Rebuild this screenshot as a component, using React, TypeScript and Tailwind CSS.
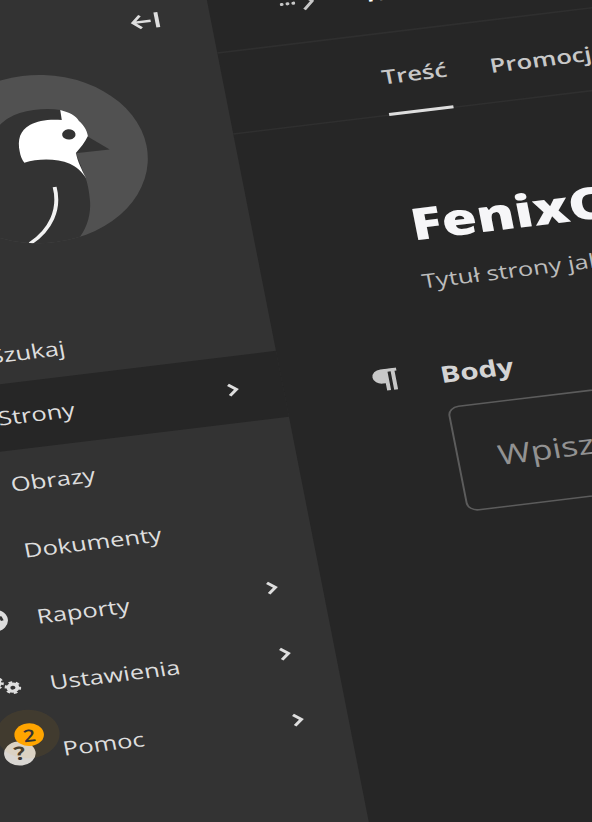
import React from "react";
import { FileText, Image as ImageIcon, Files, Search } from "lucide-react";

function Chevron() {
  return (
    <svg viewBox="0 0 16 16" className="size-4" fill="none" stroke="currentColor" strokeWidth="1.7" aria-hidden="true">
      <path d="M6.6 4.4 10.4 8 6.6 11.6" />
    </svg>
  );
}

function GlobeIcon() {
  return (
    <svg viewBox="0 0 16 16" className="size-4" aria-hidden="true">
      <circle cx="7.6" cy="7.4" r="7.6" fill="currentColor" />
      <path d="M2 5 5 3 7 5 5 8 6 11 4 13 2 9Z" fill="#333333" />
      <path d="M10.6 4.6 12.4 5.4 13 8 11.6 8.2Z" fill="#333333" />
    </svg>
  );
}

function CogsIcon() {
  return (
    <svg viewBox="0 0 16 16" className="size-4" fill="none" stroke="currentColor" aria-hidden="true">
      <circle cx="2.4" cy="4.4" r="2.4" strokeWidth="2" />
      <circle cx="2.4" cy="4.4" r="3.8" strokeWidth="1.4" strokeDasharray="1.6 1.38" />
      <circle cx="11" cy="8.6" r="2.3" strokeWidth="2" />
      <circle cx="11" cy="8.6" r="3.5" strokeWidth="1.4" strokeDasharray="1.9 1.77" />
    </svg>
  );
}

function HelpIcon() {
  return (
    <span className="relative flex size-4 items-center justify-center rounded-full bg-[#d9d6d2] text-[12px] leading-4 font-bold text-[#3a3631]">
      <span className="absolute -top-5 -left-0.5 size-8 rounded-full bg-[#ffa500]/7" />
      ?
      <span className="absolute -top-[11px] left-[7px] flex size-[15px] items-center justify-center rounded-full bg-[#ffa500] text-[11px] leading-[15px] font-semibold text-[#333333]">
        2
      </span>
    </span>
  );
}

const items = [
  { label: "Strony", icon: <FileText className="size-4" />, more: true, active: true },
  { label: "Obrazy", icon: <ImageIcon className="size-4" /> },
  { label: "Dokumenty", icon: <Files className="size-4" /> },
  { label: "Raporty", icon: <GlobeIcon />, more: true },
  { label: "Ustawienia", icon: <CogsIcon />, more: true },
  { label: "Pomoc", icon: <HelpIcon />, more: true },
];

function Bird() {
  return (
    <svg viewBox="0 0 112 112" className="mx-auto mt-[17px] size-28" role="img" aria-label="Wagtail">
      <clipPath id="disc">
        <circle cx="56" cy="56.5" r="55.4" />
      </clipPath>
      <circle cx="56" cy="56.5" r="55.4" fill="#515151" />
      <g clipPath="url(#disc)">
        <path
          d="M71.7 26.2C66 24 58 23.5 51.1 25 46 26.4 43 28.4 40 31.2 30 41 22 60 18 112H67.8C73 106 77 97 77.7 87.1 78.2 81 78.2 76 77.6 71.7L75.3 55.4 83 45.3Z"
          fill="#333333"
        />
        <path d="M82.6 45.5 92.6 55.8 75 55.6Z" fill="#333333" />
        <path
          d="M71.7 26.2C76 28.4 79 31 80 34.8 82 38 83 41 83 45.3 81 49 78 52.6 75.3 55.4 75.4 61 76.4 66 78 73 76.5 68 74 64.4 71.2 62 65 57.4 56 56 48.5 57.8 47.6 55.4 47.2 53 47.3 50.4 47.2 42 49.6 36.4 55 33.6 59.6 31.2 65 31.2 71.5 32.8Z"
          fill="#ffffff"
        />
        <circle cx="73.6" cy="42.8" r="3.4" fill="#333333" />
        <path d="M61.3 75.9C62 91 55 103.6 43.4 110.8" fill="none" stroke="#f2f2f2" strokeWidth="2" />
      </g>
    </svg>
  );
}

function Sidebar() {
  return (
    <aside className="flex w-[200px] shrink-0 flex-col bg-[#333333] text-[#dedede]">
      <div className="flex justify-end pt-10 pr-[25px]">
        <button type="button" aria-label="Zwiń menu" className="size-4">
          <svg viewBox="0 0 16 16" className="size-4" fill="none" stroke="currentColor" aria-hidden="true">
            <path d="M10.8 9.2H1.8M5.7 5 1.7 9.2 5.7 13.4" strokeWidth="1.6" />
            <path d="M14 4V14" strokeWidth="2" />
          </svg>
        </button>
      </div>
      <div className="pt-px">
        <Bird />
      </div>
      <nav className="mt-11 text-[13px] leading-5">
        <button type="button" className="flex h-11 w-full items-center gap-4 pt-1.5 pl-6 text-left">
          <Search className="size-4" />
          Szukaj
        </button>
        {items.map((item) => (
          <a
            key={item.label}
            href="#"
            className={
              item.active
                ? "flex h-11 items-center gap-3.5 bg-[#262626] pr-[18px] pl-6"
                : "flex h-11 items-center gap-3.5 pr-[18px] pl-6"
            }
          >
            {item.icon}
            <span className="grow">{item.label}</span>
            {item.more && <Chevron />}
          </a>
        ))}
      </nav>
    </aside>
  );
}

function Editor() {
  return (
    <main className="min-w-0 grow text-[#c8c8c8]">
      <header className="flex h-[76px] items-center overflow-hidden border-b border-[#2f2f2f] pt-[22px] pl-9 text-[13px] leading-5 whitespace-nowrap">
        <button type="button" aria-label="Więcej">
          <svg viewBox="0 0 8 16" className="h-4 w-2" fill="currentColor" aria-hidden="true">
            <circle cx="1" cy="8" r="1" />
            <circle cx="4" cy="8" r="1" />
            <circle cx="7" cy="8" r="1" />
          </svg>
        </button>
        <svg viewBox="0 0 16 16" className="size-4" fill="none" stroke="currentColor" strokeWidth="1.6" aria-hidden="true">
          <path d="M4 3 8.6 8 4 13" />
        </svg>
        <span className="ml-5 font-bold text-white">Nowy: FenixCMS</span>
      </header>
      <div role="tablist" className="flex h-[54px] gap-[22px] border-b border-[#2f2f2f] pl-20 text-[13px] leading-5 font-semibold">
        <button type="button" role="tab" aria-selected="true" className="-mb-px border-b-2 border-[#dedede] pt-1">
          Treść
        </button>
        <button type="button" role="tab" aria-selected="false" className="pt-1">
          Promocja
        </button>
      </div>
      <div className="pt-14 pl-20">
        <h1 className="text-[29px] leading-8 font-extrabold text-[#f6f6f8]">FenixCMS</h1>
        <p className="mt-3 text-[13px] leading-5 whitespace-nowrap text-[#bcbcbc]">Tytuł strony jaki ma być widoczny publicznie</p>
      </div>
      <div className="mt-10 flex items-center pl-[45px] leading-6">
        <svg viewBox="0 0 14 16" className="mr-[21px] h-4 w-3.5" fill="currentColor" aria-hidden="true">
          <path d="M13.4 .4H5.4A4.7 4.7 0 0 0 5.4 9.8H6.8V14.6H8.8V2.4H10.4V14.6H12.4V2.4H13.4Z" />
        </svg>
        <label htmlFor="body" className="text-[15px] leading-6 font-bold text-[#d4d4d4]">
          Body
        </label>
      </div>
      <div className="mt-2.5 pl-20">
        <input
          id="body"
          type="text"
          placeholder="Wpisz coś lub użyj „/”, aby wstawić blok"
          className="h-[70px] w-full rounded-md border border-[#5c5c5c] bg-transparent px-5 text-lg placeholder:text-[#929292]"
        />
      </div>
    </main>
  );
}

export default function App() {
  return (
    <div className="h-screen overflow-hidden bg-[#262626] font-['Open_Sans','Noto_Sans',sans-serif]">
      <div className="flex min-h-full w-full origin-top-left [transform:matrix(1.95,-0.236,0.2955,1.5,-195,-13)]">
        <Sidebar />
        <Editor />
      </div>
    </div>
  );
}
